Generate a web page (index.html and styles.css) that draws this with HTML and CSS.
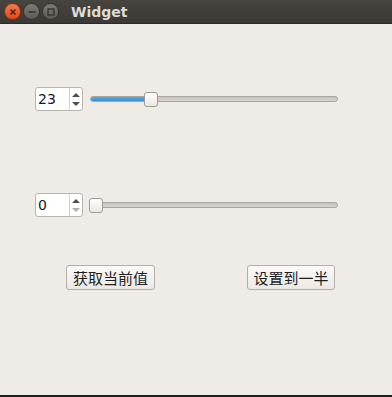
FILE: index.html
```html
<!DOCTYPE html>
<html lang="zh-CN">
<head>
    <meta charset="UTF-8">
    <title>Widget</title>
    <link rel="stylesheet" href="styles.css">
</head>
<body>
    <div class="window">
        <div class="titlebar">
            <div class="win-btn close">
                <svg width="8" height="8" viewBox="0 0 8 8"><path d="M1.5 1.5 L6.5 6.5 M6.5 1.5 L1.5 6.5" stroke="#4a1a0a" stroke-width="1.4"/></svg>
            </div>
            <div class="win-btn">
                <svg width="8" height="8" viewBox="0 0 8 8"><path d="M0.5 4 H7.5" stroke="#2e2d2a" stroke-width="1.4"/></svg>
            </div>
            <div class="win-btn">
                <svg width="8" height="8" viewBox="0 0 8 8"><rect x="1" y="1" width="6" height="6" fill="none" stroke="#2e2d2a" stroke-width="1.2"/></svg>
            </div>
            <span class="title">Widget</span>
        </div>

        <div class="content">
            <div class="row row-first">
                <div class="spinbox">
                    <span class="spin-value">23</span>
                    <div class="spin-arrows">
                        <span class="arrow up"></span>
                        <span class="arrow down"></span>
                    </div>
                </div>
                <div class="slider">
                    <div class="groove">
                        <div class="fill" style="width: 56px"></div>
                    </div>
                    <div class="handle" style="left: 54px"></div>
                </div>
            </div>

            <div class="row row-second">
                <div class="spinbox">
                    <span class="spin-value">0</span>
                    <div class="spin-arrows">
                        <span class="arrow up"></span>
                        <span class="arrow down disabled"></span>
                    </div>
                </div>
                <div class="slider">
                    <div class="groove"></div>
                    <div class="handle" style="left: -1px"></div>
                </div>
            </div>

            <div class="buttons">
                <button class="btn btn-get">获取当前值</button>
                <button class="btn btn-half">设置到一半</button>
            </div>
        </div>

        <div class="taskbar"></div>
    </div>
</body>
</html>
```

FILE: styles.css
```css
* {
    box-sizing: border-box;
    margin: 0;
    padding: 0;
}

body {
    background-color: #efebe7;
    font-family: "DejaVu Sans", "Noto Sans CJK SC", sans-serif;
    color: #3c3c3c;
}

.window {
    width: 392px;
    height: 397px;
    display: flex;
    flex-direction: column;
    overflow: hidden;
}

.titlebar {
    height: 24px;
    background: linear-gradient(#46453f, #3a3935);
    border-bottom: 1px solid #2b2a26;
    display: flex;
    align-items: center;
    padding-left: 4px;
    gap: 2px;
}

.win-btn {
    width: 17px;
    height: 17px;
    border-radius: 50%;
    background: linear-gradient(#7b7a74, #5c5b56);
    border: 1px solid #33322e;
    display: flex;
    align-items: center;
    justify-content: center;
}

.win-btn.close {
    background: linear-gradient(#f27a4e, #df4a1c);
    border-color: #8a3416;
}

.title {
    margin-left: 10px;
    color: #dfdbd2;
    font-family: "DejaVu Sans", sans-serif;
    font-weight: bold;
    font-size: 14px;
}

.content {
    flex: 1;
    padding-left: 35px;
}

.row {
    display: flex;
    align-items: center;
    height: 24px;
}

.row-first {
    margin-top: 63px;
}

.row-second {
    margin-top: 82px;
}

.spinbox {
    width: 48px;
    height: 24px;
    background-color: #fff;
    border: 1px solid #b9b5ae;
    border-radius: 3px;
    display: flex;
}

.spin-value {
    flex: 1;
    font-size: 14px;
    line-height: 22px;
    padding-left: 2px;
    color: #1a1a1a;
}

.spin-arrows {
    width: 13px;
    border-left: 1px solid #d6d2cc;
    display: flex;
    flex-direction: column;
    align-items: center;
    justify-content: center;
    gap: 5px;
}

.arrow {
    width: 0;
    height: 0;
    border-left: 4px solid transparent;
    border-right: 4px solid transparent;
}

.arrow.up {
    border-bottom: 4px solid #4e4d4a;
}

.arrow.down {
    border-top: 4px solid #4e4d4a;
}

.arrow.down.disabled {
    border-top-color: #b0ada8;
}

.slider {
    position: relative;
    margin-left: 7px;
    width: 248px;
    height: 24px;
    display: flex;
    align-items: center;
}

.groove {
    width: 100%;
    height: 6px;
    background: linear-gradient(#c6c2bc, #d8d4ce);
    border: 1px solid #aaa59e;
    border-radius: 3px;
    overflow: hidden;
}

.fill {
    height: 100%;
    background: linear-gradient(#5aa7e6, #3b8ed4);
    border-right: 1px solid #2b6ca6;
}

.handle {
    position: absolute;
    top: 5px;
    width: 14px;
    height: 15px;
    background: linear-gradient(#ffffff, #eae7e3);
    border: 1px solid #9e9a94;
    border-radius: 3px;
}

.buttons {
    display: flex;
    margin-top: 48px;
    padding-left: 31px;
    gap: 92px;
}

.btn {
    height: 25px;
    padding: 0;
    background: linear-gradient(#fbfaf9, #ece9e5);
    border: 1px solid #b3aea7;
    border-radius: 3px;
    font-family: "Noto Sans CJK SC", sans-serif;
    font-size: 15px;
    color: #1e1e1e;
}

.btn-get {
    width: 89px;
}

.btn-half {
    width: 88px;
}

.taskbar {
    height: 2px;
    background-color: #1f1f1f;
}
```
